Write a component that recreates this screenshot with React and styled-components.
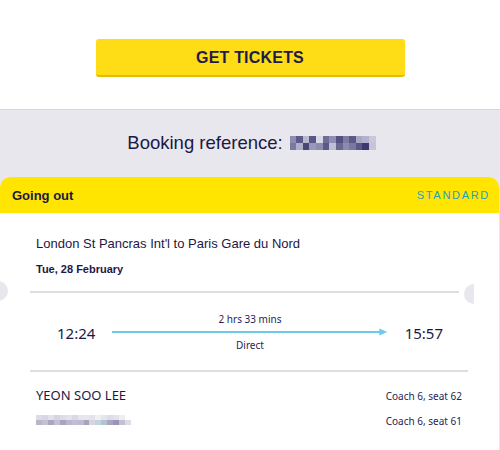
import React from 'react';
import styled, { createGlobalStyle } from 'styled-components';

const GlobalStyle = createGlobalStyle`
  html, body {
    margin: 0;
    padding: 0;
    background: #ffffff;
    font-family: 'Liberation Sans', Arial, sans-serif;
    color: #1c1845;
  }
  * { box-sizing: border-box; }
`;

const refPixels = [
  ['#8e8cae', '#5d5a88', '#b9b8cf', '#5a5786', '#d9d8e4', '#6f6c96', '#8f8db0', '#54507f', '#7e7ba2', '#5c5987', '#a9a7c4', '#b3b1cb', '#c9c8db'],
  ['#7c79a1', '#b0aec8', '#4a4679', '#9a98b8', '#8f8cae', '#5b588a', '#c0bed4', '#6a6792', '#8d8aad', '#7a77a0', '#5b5887', '#3c3870', '#c6c5d8'],
];

const namePixels = [
  ['#dcdbe6', '#d8d6e3', '#e2e1ea', '#d6d4e2', '#dedde7', '#e4e3eb', '#d9d8e4', '#e6e5ed', '#e8e7ee', '#e4e3eb', '#f0eff4', '#e6e5ee', '#dddce7', '#e4e3ec', '#eeedf2', '#ffffff'],
  ['#b7b6cc', '#c3c0d4', '#a9a6c2', '#c6bfd4', '#a8a5c1', '#b9b6cd', '#c0bed3', '#bdbbd0', '#a5a3be', '#d6d5e1', '#c4d3dc', '#b2c3d3', '#a8a5c1', '#9895b6', '#c2c0d4', '#dcdbe6'],
];

const Page = styled.div`
  width: 500px;
  height: 450px;
  overflow: hidden;
`;

const TopArea = styled.div`
  height: 110px;
  padding-top: 39px;
  display: flex;
  justify-content: center;
  border-bottom: 1px solid #d6d5dc;
`;

const YellowButton = styled.button`
  width: 309px;
  height: 38px;
  background: #fedc16;
  border: none;
  border-bottom: 2px solid #e2bd00;
  border-radius: 3px;
  font-family: 'Liberation Sans', Arial, sans-serif;
  font-size: 16px;
  font-weight: bold;
  color: #1e1a4a;
  letter-spacing: 0.2px;
  padding: 0;
  padding-top: 1px;
  cursor: pointer;
`;

const GreyArea = styled.div`
  background: #e8e7ee;
  padding-top: 18px;
`;

const BookingRef = styled.div`
  display: flex;
  justify-content: center;
  align-items: center;
  gap: 7px;
  font-size: 18.5px;
  color: #1c1845;
  height: 30px;
  margin-bottom: 19px;
  padding-left: 3px;
`;

const PixelBlock = styled.div`
  display: flex;
  flex-direction: column;
  width: ${p => p.$w}px;
`;

const PixelRow = styled.div`
  display: flex;
  height: ${p => p.$h}px;
`;

const Pixel = styled.span`
  flex: 1;
`;

const Card = styled.div`
  position: relative;
  background: #ffffff;
  margin-right: 1px;
  border-radius: 10px 10px 0 0;
`;

const CardHeader = styled.div`
  height: 36px;
  background: #ffe500;
  border-radius: 10px 10px 0 0;
  display: flex;
  align-items: center;
  justify-content: space-between;
  padding: 0 9px 0 12px;
`;

const Direction = styled.span`
  font-size: 13px;
  font-weight: bold;
  color: #1c1845;
`;

const FareClass = styled.span`
  font-size: 11px;
  letter-spacing: 1.7px;
  color: #259fc0;
`;

const Journey = styled.div`
  padding: 23px 0 0 36px;
`;

const Route = styled.div`
  font-size: 13px;
  color: #1c1845;
  line-height: 16px;
`;

const DateLine = styled.div`
  margin-top: 10px;
  font-size: 11px;
  font-weight: bold;
  color: #1c1845;
  line-height: 14px;
`;

const Divider = styled.div`
  height: 2px;
  background: #dedde3;
  margin: ${p => p.$m};
`;

const Notch = styled.span`
  position: absolute;
  top: ${p => (p.$side === 'left' ? '104px' : '107px')};
  width: 20px;
  height: 20px;
  border-radius: 50%;
  background: #e8e7ee;
  left: ${p => (p.$side === 'left' ? '-12px' : 'auto')};
  right: ${p => (p.$side === 'right' ? '15px' : 'auto')};
  clip-path: ${p => (p.$side === 'right' ? 'inset(0 50% 0 0)' : 'none')};
`;

const TimesRow = styled.div`
  display: grid;
  grid-template-columns: auto 1fr auto;
  align-items: center;
  padding: 20px 56px 0 57px;
  column-gap: 17px;
`;

const Time = styled.span`
  font-family: 'Noto Sans', 'Open Sans', sans-serif;
  font-size: 15px;
  color: #1c1845;
`;

const Leg = styled.div`
  display: flex;
  flex-direction: column;
  align-items: center;
  font-family: 'Noto Sans', 'Open Sans', sans-serif;
  font-size: 10px;
  color: #2a2456;
  line-height: 13px;
`;

const Arrow = styled.svg`
  display: block;
  width: 100%;
  height: 8px;
  margin: 2px 0 3px;
`;

const Passengers = styled.div`
  padding: 14px 37px 0 36px;
  display: flex;
  flex-direction: column;
  gap: 9px;
`;

const PassengerRow = styled.div`
  display: flex;
  align-items: center;
  justify-content: space-between;
  height: ${p => p.$h}px;
`;

const PassengerName = styled.span`
  font-family: 'Noto Sans', 'Open Sans', sans-serif;
  font-size: 13px;
  color: #1c1845;
`;

const Seat = styled.span`
  font-family: 'Noto Sans', 'Open Sans', sans-serif;
  font-size: 10px;
  color: #2a2456;
  padding-top: 2px;
`;

const Pixelated = ({ rows, width, rowHeight }) => (
  <PixelBlock $w={width}>
    {rows.map((row, i) => (
      <PixelRow key={i} $h={rowHeight}>
        {row.map((c, j) => (
          <Pixel key={j} style={{ background: c }} />
        ))}
      </PixelRow>
    ))}
  </PixelBlock>
);

const App = () => {
  return (
    <Page>
      <GlobalStyle />
      <TopArea>
        <YellowButton>GET TICKETS</YellowButton>
      </TopArea>
      <GreyArea>
        <BookingRef>
          <span>Booking reference:</span>
          <Pixelated rows={refPixels} width={86} rowHeight={7} />
        </BookingRef>
        <Card>
          <CardHeader>
            <Direction>Going out</Direction>
            <FareClass>STANDARD</FareClass>
          </CardHeader>
          <Journey>
            <Route>London St Pancras Int'l to Paris Gare du Nord</Route>
            <DateLine>Tue, 28 February</DateLine>
          </Journey>
          <Notch $side="left" />
          <Notch $side="right" />
          <Divider $m="15px 40px 0 30px" />
          <TimesRow>
            <Time>12:24</Time>
            <Leg>
              <span>2 hrs 33 mins</span>
              <Arrow viewBox="0 0 276 8" preserveAspectRatio="none">
                <line x1="0" y1="4" x2="270" y2="4" stroke="#6dcbe6" strokeWidth="2" />
                <path d="M268 0.5 L276 4 L268 7.5 Z" fill="#6dcbe6" />
              </Arrow>
              <span>Direct</span>
            </Leg>
            <Time>15:57</Time>
          </TimesRow>
          <Divider $m="18px 31px 0 30px" />
          <Passengers>
            <PassengerRow $h={18}>
              <PassengerName>YEON SOO LEE</PassengerName>
              <Seat>Coach 6, seat 62</Seat>
            </PassengerRow>
            <PassengerRow $h={14}>
              <Pixelated rows={namePixels} width={95} rowHeight={5} />
              <Seat>Coach 6, seat 61</Seat>
            </PassengerRow>
          </Passengers>
          <div style={{ height: 40 }} />
        </Card>
      </GreyArea>
    </Page>
  );
};

export default App;
